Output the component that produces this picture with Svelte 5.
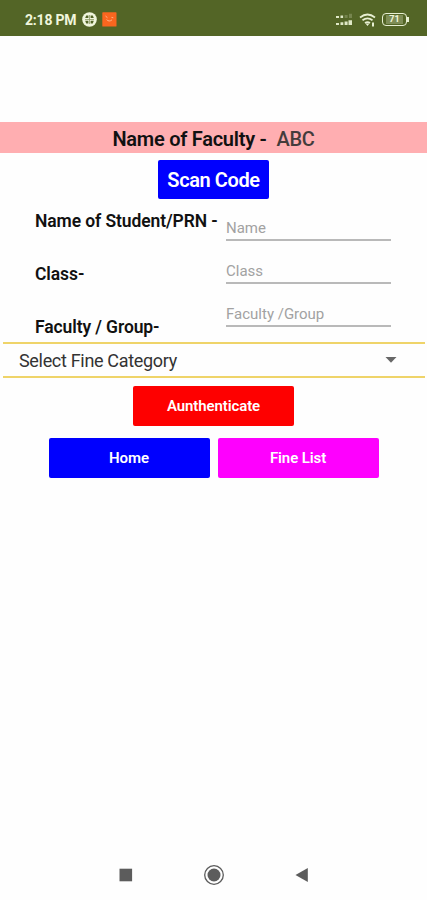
<script lang="ts">
const fields = [
  { id: "name", label: "Name of Student/PRN -", hint: "Name" },
  { id: "class", label: "Class-", hint: "Class" },
  { id: "group", label: "Faculty / Group-", hint: "Faculty /Group" },
];

let faculty = "ABC";
let values: Record<string, string> = $state({ name: "", class: "", group: "" });
</script>

<div class="screen">
  <header class="status">
    <span class="time">2:18 PM</span>
    <svg class="ball" width="15" height="15" viewBox="0 0 15 15" aria-hidden="true">
      <circle cx="7.5" cy="7.5" r="7.3" fill="#f0f6dc" />
      <path d="M4.2 3.4h2.2v2.7H3.2zM8.6 3.4h2.2l1 2.7H8.600zM3.2 8.700h3.200v2.700H4.200zM8.600 8.700h3.200l-1 2.700H8.600z" fill="#536526" />
      <path d="M7.5 3v9M3 7.500h9" stroke="#8d9b66" stroke-width="0.8" />
    </svg>
    <svg class="app" width="15" height="15" viewBox="0 0 15 15" aria-hidden="true">
      <rect x="0.3" y="0.3" width="14.2" height="14.2" rx="0.6" fill="#f9661f" />
      <path d="M3.5 4l2 1.8M4.6 7.6c1.5 1.8 3.8 1.8 5.4.2M9.5 5.4l1.8.4" stroke="#ffb58a" stroke-width="1" fill="none" />
    </svg>
    <span class="grow"></span>
    <svg class="signal" width="17" height="13" viewBox="0 0 17 13" aria-hidden="true" fill="#dfe8c6">
      <path d="M0 3h3v2H0zM4.5 2.6h2.6V5H4.5zM0 10h3v2H0zM4.5 9.3h2.8V12H4.5zM8.6 8.5h3V12h-3zM12.5 7.2h3.500V12h-3.500z" />
      <path d="M8.6 2h3v3h-3zM13 .7h3V5h-3z" opacity="0.25" />
    </svg>
    <svg class="wifi" width="18" height="14" viewBox="0 0 18 14" aria-hidden="true">
      <path d="M1 4.5q7.500-6 15 0M3.500 7.300q5-3.800 10 0M6 10q2.500-1.800 5 0" stroke="#e7efd2" stroke-width="1.7" fill="none" />
      <path d="M6.500 10.500h4l-2 2.500zM13 9.500h2v4h-2z" fill="#e7efd2" />
    </svg>
    <span class="battery"><span class="level">71</span></span>
  </header>

  <h1 class="faculty">Name of Faculty - <span class="faculty-name">{faculty}</span></h1>

  <button class="btn scan">Scan Code</button>

  <form class="form">
    <div class="labels">
      {#each fields as field}
        <label for={field.id}>{field.label}</label>
      {/each}
    </div>
    <div class="inputs">
      {#each fields as field}
        <input id={field.id} placeholder={field.hint} bind:value={values[field.id]} />
      {/each}
    </div>
  </form>

  <div class="spinner">
    <span>Select Fine Category</span>
    <svg width="12" height="6" viewBox="0 0 12 6" aria-hidden="true"><path d="M0.500 0h11L6 5.700z" fill="#686868" /></svg>
  </div>

  <button class="btn auth">Aunthenticate</button>

  <div class="actions">
    <button class="btn home">Home</button>
    <button class="btn list">Fine List</button>
  </div>

  <nav class="navbar">
    <svg width="14" height="22" viewBox="0 0 14 22" aria-hidden="true"><rect x="0.500" y="4.700" width="12.600" height="12.600" fill="#5c5c5c" /></svg>
    <svg width="22" height="22" viewBox="0 0 22 22" aria-hidden="true">
      <circle cx="11" cy="11" r="9.300" fill="none" stroke="#5c5c5c" stroke-width="1.300" />
      <circle cx="11" cy="11" r="6.500" fill="#5c5c5c" />
    </svg>
    <svg width="14" height="22" viewBox="0 0 14 22" aria-hidden="true"><path d="M0.500 11L12.800 4v14z" fill="#5c5c5c" /></svg>
  </nav>
</div>

<style>
  :global(body) {
    margin: 0;
    background: #fefefe;
  }

  .screen {
    display: flex;
    flex-direction: column;
    box-sizing: border-box;
    width: 427px;
    height: 900px;
    overflow: hidden;
    font-family: Roboto, "Liberation Sans", sans-serif;
    color: #111;
  }

  .status {
    display: flex;
    align-items: center;
    box-sizing: border-box;
    height: 36px;
    padding: 3px 17px 0 25px;
    background: #536526;
    color: #f0f6dc;
  }

  .time {
    width: 57px;
    font-size: 14px;
    font-weight: 700;
    letter-spacing: -0.2px;
    white-space: nowrap;
  }

  .app {
    margin-left: 5px;
  }

  .grow {
    flex: 1;
  }

  .wifi {
    margin: 0 5px 0 6px;
  }

  .battery {
    display: flex;
    align-items: center;
    justify-content: center;
    box-sizing: border-box;
    position: relative;
    width: 25px;
    height: 13px;
    margin-right: 3px;
    border: 1.5px solid #e7efd2;
    border-radius: 4px;
  }

  .battery::after {
    content: "";
    position: absolute;
    right: -3px;
    width: 2px;
    height: 5px;
    background: #e7efd2;
  }

  .level {
    padding: 0 3px;
    background: #7e8d56;
    font-size: 9px;
    font-weight: 700;
    line-height: 9px;
  }

  .faculty {
    height: 31px;
    margin: 86px 0 0;
    background: #ffaeb1;
    font-size: 20px;
    font-weight: 600;
    letter-spacing: -0.25px;
    line-height: 34px;
    text-align: center;
    white-space: nowrap;
  }

  .faculty-name {
    margin-left: 5px;
    color: #443c3c;
    font-weight: 500;
  }

  .btn {
    padding: 0;
    border: 0;
    border-radius: 2px;
    color: #fff;
    font: 600 15px/41px Roboto, "Liberation Sans", sans-serif;
    letter-spacing: -0.1px;
    white-space: nowrap;
  }

  .scan {
    align-self: center;
    width: 111px;
    height: 39px;
    margin-top: 7px;
    background: #0000fe;
    font-size: 20px;
    letter-spacing: -0.4px;
  }

  .form {
    display: grid;
    grid-template-columns: 191px 165px;
    height: 143px;
    padding-left: 35px;
  }

  .labels {
    display: flex;
    flex-direction: column;
    gap: 29px;
    padding-top: 10px;
  }

  label {
    height: 24px;
    font-size: 17.5px;
    font-weight: 600;
    letter-spacing: -0.1px;
    line-height: 24px;
    white-space: nowrap;
  }

  .inputs {
    display: flex;
    flex-direction: column;
    padding-top: 18px;
    gap: 19px;
  }

  input {
    box-sizing: border-box;
    width: 165px;
    height: 24px;
    padding: 0;
    border: 0;
    border-bottom: 2px solid #b9b9b9;
    background: none;
    font: 400 15px Roboto, "Liberation Sans", sans-serif;
    outline: none;
  }

  input::placeholder {
    color: #a2a2a2;
  }

  .spinner {
    display: flex;
    align-items: center;
    justify-content: space-between;
    box-sizing: border-box;
    height: 36px;
    margin: 0 2px 0 3px;
    padding: 0 28px 0 16px;
    border: solid #efd469;
    border-width: 2px 0;
    color: #333;
    font-size: 18px;
    letter-spacing: -0.32px;
  }

  .auth {
    align-self: center;
    width: 161px;
    height: 40px;
    margin-top: 8px;
    background: #fe0000;
  }

  .actions {
    display: flex;
    justify-content: center;
    gap: 8px;
    margin-top: 12px;
  }

  .actions .btn {
    width: 161px;
    height: 40px;
  }

  .home {
    background: #0000fe;
  }

  .list {
    background: #fe00fe;
  }

  .navbar {
    display: flex;
    align-items: center;
    justify-content: space-between;
    box-sizing: border-box;
    height: 50px;
    margin-top: auto;
    padding: 0 118px 0 119px;
    background: #fefefe;
  }
</style>
